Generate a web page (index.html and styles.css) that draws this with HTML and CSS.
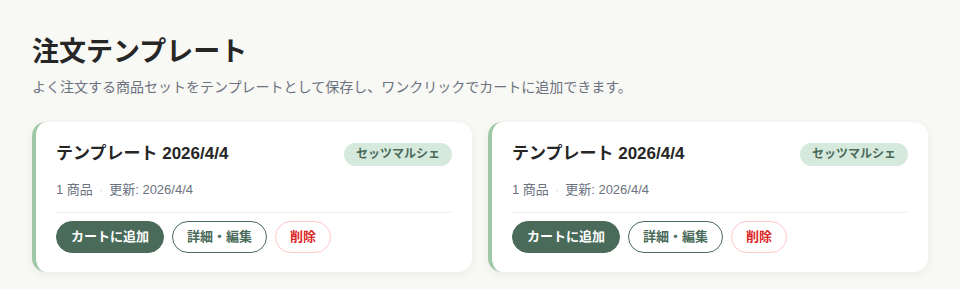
FILE: index.html
```html
<!DOCTYPE html>
<html lang="ja">
<head>
<meta charset="utf-8">
<title>注文テンプレート</title>
<link rel="stylesheet" href="styles.css">
</head>
<body>
<main class="page">
  <h1 class="page-title">注文テンプレート</h1>
  <p class="page-desc">よく注文する商品セットをテンプレートとして保存し、ワンクリックでカートに追加できます。</p>
  <div class="grid">
    <section class="card">
      <div class="card-head">
        <h2 class="card-title">テンプレート 2026/4/4</h2>
        <span class="badge">セッツマルシェ</span>
      </div>
      <div class="meta"><span>1 商品</span><span class="sep">·</span><span>更新: 2026/4/4</span></div>
      <div class="actions">
        <button class="btn btn-primary">カートに追加</button>
        <button class="btn btn-outline">詳細・編集</button>
        <button class="btn btn-danger">削除</button>
      </div>
    </section>
    <section class="card">
      <div class="card-head">
        <h2 class="card-title">テンプレート 2026/4/4</h2>
        <span class="badge">セッツマルシェ</span>
      </div>
      <div class="meta"><span>1 商品</span><span class="sep">·</span><span>更新: 2026/4/4</span></div>
      <div class="actions">
        <button class="btn btn-primary">カートに追加</button>
        <button class="btn btn-outline">詳細・編集</button>
        <button class="btn btn-danger">削除</button>
      </div>
    </section>
  </div>
</main>
</body>
</html>
```

FILE: styles.css
```css
* { box-sizing: border-box; }
html, body {
  margin: 0;
  background: #f8f8f4;
}
body {
  font-family: "Liberation Sans", "Noto Sans CJK JP", sans-serif;
  color: #222;
}
.page {
  padding: 34px 32px 20px;
}
.page-title {
  margin: 0;
  font-size: 27px;
  line-height: 36px;
  font-weight: 700;
  color: #262626;
}
.page-desc {
  margin: 7px 0 0;
  font-size: 14px;
  line-height: 20px;
  color: #6b7280;
}
.grid {
  margin-top: 25px;
  display: grid;
  grid-template-columns: 1fr 1fr;
  gap: 16px;
}
.card {
  background: #fff;
  border-radius: 14px;
  border-left: 4px solid #9fc8a6;
  padding: 20px 20px 19px 20px;
  box-shadow: 0 2px 10px rgba(0, 0, 0, 0.06);
}
.card-head {
  display: flex;
  align-items: center;
  justify-content: space-between;
  height: 24px;
}
.card-title {
  margin: 0;
  font-size: 17px;
  line-height: 24px;
  font-weight: 700;
  color: #262626;
}
.badge {
  display: inline-block;
  height: 23px;
  line-height: 23px;
  padding: 0 12px;
  border-radius: 999px;
  background: #d6e9dd;
  color: #4a6b5a;
  font-size: 12px;
  font-weight: 700;
}
.meta {
  margin-top: 15px;
  font-size: 13px;
  line-height: 18px;
  color: #6b7280;
  display: flex;
  align-items: center;
}
.sep {
  margin: 0 6px;
  color: #d1d5db;
}
.actions {
  margin-top: 13px;
  border-top: 1px solid #eef0f5;
  padding-top: 8px;
  display: flex;
  gap: 8px;
}
.btn {
  height: 32px;
  padding: 0 14px;
  border-radius: 999px;
  font-family: inherit;
  font-size: 13px;
  font-weight: 700;
  line-height: 30px;
  background: #fff;
  cursor: pointer;
}
.btn-primary {
  background: #4a6b5a;
  border: 1px solid #4a6b5a;
  color: #fff;
}
.btn-outline {
  border: 1px solid #4a6b5a;
  color: #4a6b5a;
}
.btn-danger {
  border: 1px solid #fecaca;
  color: #dc2626;
}
```
